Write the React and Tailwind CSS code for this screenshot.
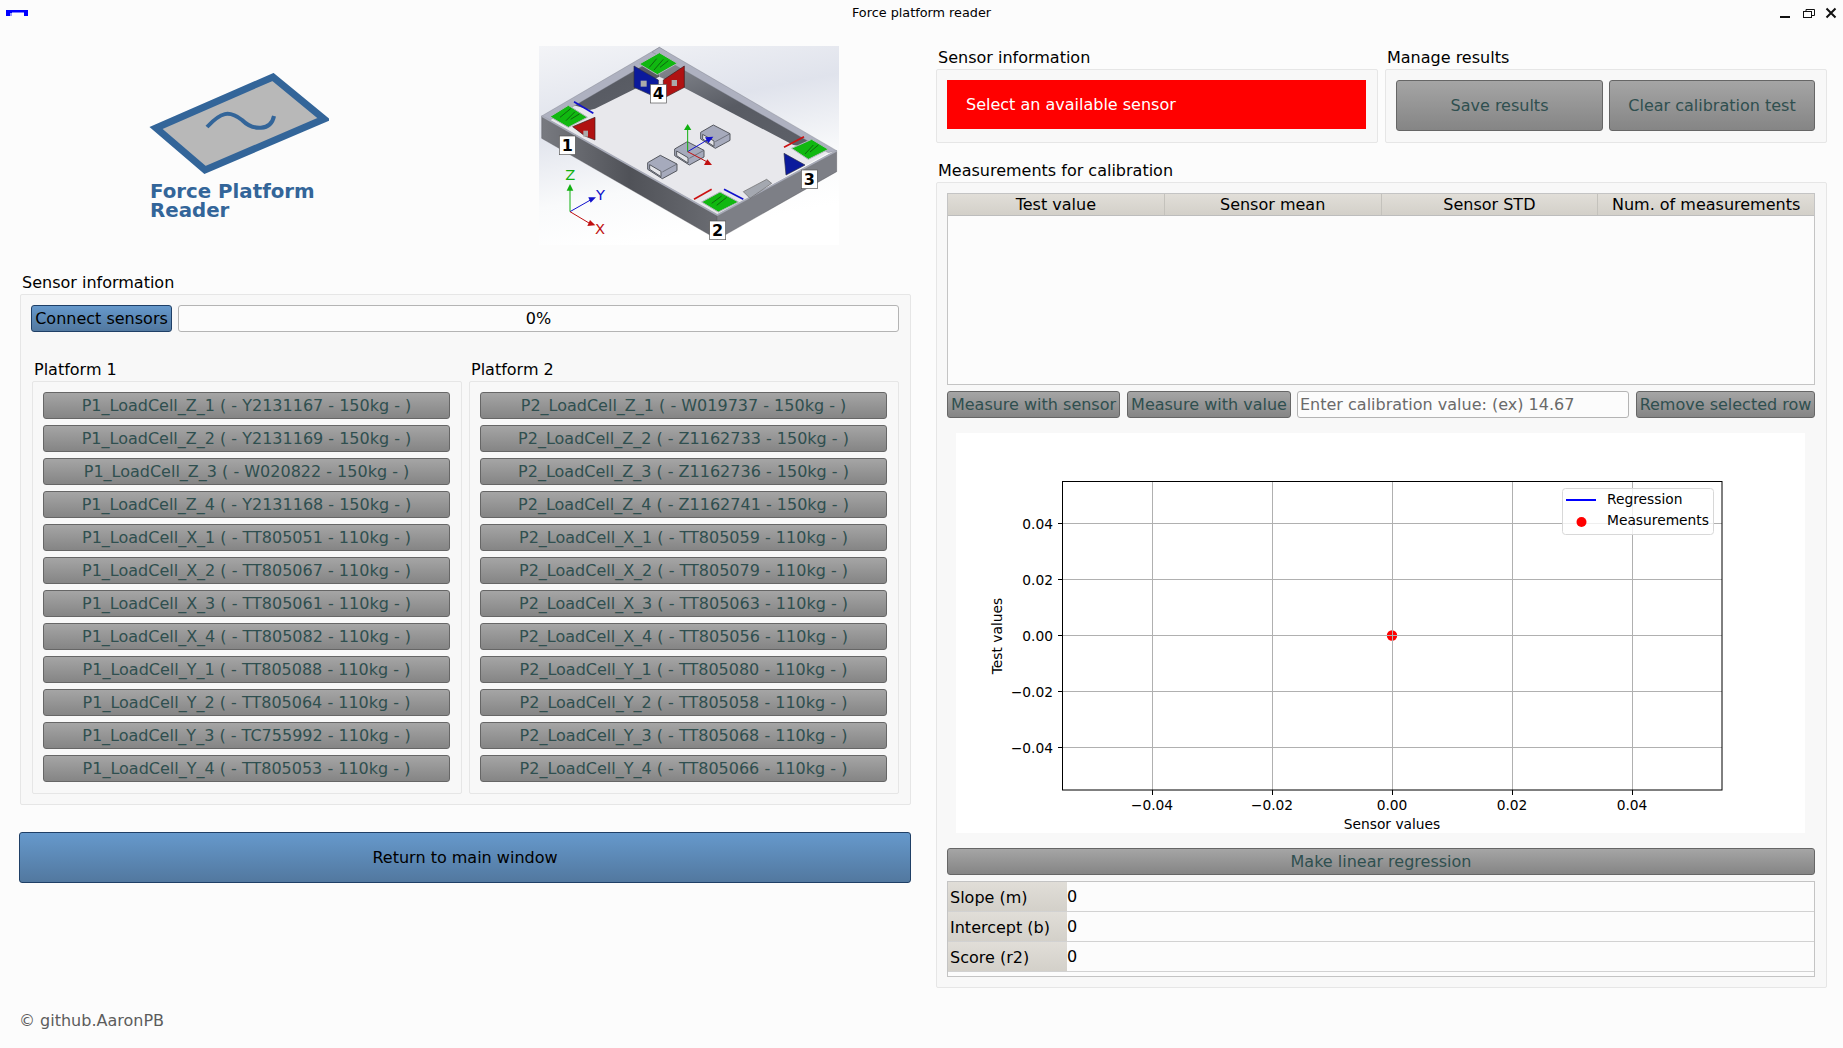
import React from 'react';

const p1Sensors = [
  'P1_LoadCell_Z_1 ( - Y2131167 - 150kg - )',
  'P1_LoadCell_Z_2 ( - Y2131169 - 150kg - )',
  'P1_LoadCell_Z_3 ( - W020822 - 150kg - )',
  'P1_LoadCell_Z_4 ( - Y2131168 - 150kg - )',
  'P1_LoadCell_X_1 ( - TT805051 - 110kg - )',
  'P1_LoadCell_X_2 ( - TT805067 - 110kg - )',
  'P1_LoadCell_X_3 ( - TT805061 - 110kg - )',
  'P1_LoadCell_X_4 ( - TT805082 - 110kg - )',
  'P1_LoadCell_Y_1 ( - TT805088 - 110kg - )',
  'P1_LoadCell_Y_2 ( - TT805064 - 110kg - )',
  'P1_LoadCell_Y_3 ( - TC755992 - 110kg - )',
  'P1_LoadCell_Y_4 ( - TT805053 - 110kg - )',
];

const p2Sensors = [
  'P2_LoadCell_Z_1 ( - W019737 - 150kg - )',
  'P2_LoadCell_Z_2 ( - Z1162733 - 150kg - )',
  'P2_LoadCell_Z_3 ( - Z1162736 - 150kg - )',
  'P2_LoadCell_Z_4 ( - Z1162741 - 150kg - )',
  'P2_LoadCell_X_1 ( - TT805059 - 110kg - )',
  'P2_LoadCell_X_2 ( - TT805079 - 110kg - )',
  'P2_LoadCell_X_3 ( - TT805063 - 110kg - )',
  'P2_LoadCell_X_4 ( - TT805056 - 110kg - )',
  'P2_LoadCell_Y_1 ( - TT805080 - 110kg - )',
  'P2_LoadCell_Y_2 ( - TT805058 - 110kg - )',
  'P2_LoadCell_Y_3 ( - TT805068 - 110kg - )',
  'P2_LoadCell_Y_4 ( - TT805066 - 110kg - )',
];

const grayBtn =
  'flex items-center justify-center rounded-[3px] border border-[#666666] bg-gradient-to-b from-[#a5a5a5] to-[#858585] text-[#2f4f4f] whitespace-nowrap';
const blueBtn =
  'flex items-center justify-center rounded-[3px] border border-[#1f3f66] bg-gradient-to-b from-[#6699cc] to-[#52789f] text-black whitespace-nowrap';
const group = 'rounded-[2px] border border-[#e6e6e6] bg-[#f8f8f8]';
const headCell = 'bg-gradient-to-b from-[#e1ded8] to-[#d3d0c9]';

const Label = ({ children, className = '' }) => (
  <div className={`h-[18px] mb-[3px] leading-[20px] ${className}`}>{children}</div>
);

const Logo = () => (
  <div className="w-[180px] ml-[130px] mt-[27px]">
    <svg width="180" height="104" viewBox="150 73 180 104" className="block">
      <polygon points="157,128 274,77 325,119 206,170" fill="#b8b8b8" stroke="#336599" strokeWidth="7" />
      <path d="M208 127 C 222 112, 230 110, 243 120 C 254 131, 272 131, 275 116" fill="none" stroke="#336599" strokeWidth="4" />
    </svg>
    <div className="mt-[5px] ml-px font-bold text-[19.8px] leading-[19px] text-[#336599]">
      Force Platform
      <br />
      Reader
    </div>
  </div>
);

const Plate = ({ points, lines }) => (
  <g>
    <polygon points={points} fill="#10b810" stroke="#b0b4bc" strokeWidth="3" />
    <path d={lines} fill="none" stroke="#0d3d0d" strokeWidth="2" />
  </g>
);

const NumTag = ({ x, y, n }) => (
  <g>
    <rect x={x} y={y} width="48" height="56" fill="#fff" stroke="#555" strokeWidth="2" />
    <text x={x + 24} y={y + 45} textAnchor="middle" fontSize="48" fontWeight="700" fill="#000">{n}</text>
  </g>
);

// small load cell block, x/y is its back corner
const Cell = ({ x, y }) => (
  <g transform={`translate(${x} ${y})`}>
    <polygon points="0,22 38,0 88,26 88,46 44,70 0,42" fill="#a6aabc" stroke="#55585f" strokeWidth="3" />
    <polygon points="6,28 40,48 40,64 6,42" fill="#e4e4e8" stroke="#55585f" strokeWidth="3" />
    <line x1="44" y1="50" x2="88" y2="26" stroke="#55585f" strokeWidth="2" />
  </g>
);

// isometric render of the platform frame
const PlatformRender = () => (
  <svg width="300" height="199" viewBox="117 48 900 597" className="block">
    <defs>
      <linearGradient id="sky" x1="0" y1="0" x2="0.3" y2="1">
        <stop offset="0" stopColor="#f3f4f7" />
        <stop offset="0.4" stopColor="#e0e3ec" />
        <stop offset="0.75" stopColor="#f9fafb" />
        <stop offset="1" stopColor="#ffffff" />
      </linearGradient>
      <linearGradient id="wallBack" x1="0" y1="0" x2="0.6" y2="1">
        <stop offset="0" stopColor="#8d9097" />
        <stop offset="0.6" stopColor="#585b63" />
        <stop offset="1" stopColor="#5c5f67" />
      </linearGradient>
      <linearGradient id="wallFront" x1="0" y1="0" x2="1" y2="0">
        <stop offset="0" stopColor="#787a80" />
        <stop offset="0.5" stopColor="#505258" />
        <stop offset="1" stopColor="#6a6c72" />
      </linearGradient>
    </defs>
    <rect x="117" y="48" width="900" height="597" fill="url(#sky)" />
    {/* floor */}
    <polygon points="150,270 478,130 985,368 652,555" fill="#e8e8ec" />
    {/* inner walls */}
    <polygon points="210,222 478,68 478,140 285,236 270,240" fill="url(#wallBack)" />
    <polygon points="478,68 985,362 880,345 555,175 478,140" fill="url(#wallBack)" />
    {/* rim */}
    <polygon points="125,258 478,52 500,66 150,270" fill="#aeb1c0" stroke="#6c6f78" strokeWidth="1" />
    <polygon points="478,52 1010,362 985,368 456,66" fill="#aeb1c0" stroke="#6c6f78" strokeWidth="1" />
    {/* outer walls */}
    <polygon points="125,258 652,555 652,628 125,325" fill="url(#wallFront)" stroke="#3f4146" strokeWidth="1" />
    <polygon points="652,555 1010,362 1010,425 652,628" fill="#7d7f86" stroke="#3f4146" strokeWidth="1" />
    <path d="M125 258 L652 555 L1010 362" fill="none" stroke="#a8abb8" strokeWidth="5" />
    {/* corner 4 */}
    <polygon points="402,108 475,150 475,205 402,172" fill="#0b1a9c" stroke="#2a2d44" strokeWidth="2" />
    <polygon points="490,150 553,108 553,172 490,205" fill="#b01212" stroke="#3d1a1a" strokeWidth="2" />
    <rect x="422" y="152" width="18" height="18" fill="#aaa" />
    <rect x="515" y="150" width="16" height="18" fill="#aaa" />
    <Plate points="418,102 478,68 532,100 472,134" lines="M448 112 L470 86 M462 120 L490 88 M480 112 L505 92" />
    {/* corner 1 */}
    <polygon points="218,290 285,262 285,330 255,318" fill="#b01212" stroke="#3d1a1a" strokeWidth="2" />
    <rect x="250" y="302" width="14" height="18" fill="#aaa" />
    <line x1="222" y1="215" x2="280" y2="250" stroke="#1111cc" strokeWidth="5" />
    <Plate points="150,260 205,226 262,262 205,292" lines="M180 262 L212 236 M198 272 L225 245 M212 268 L238 252" />
    {/* corner 3 */}
    <polygon points="852,370 915,405 858,435" fill="#0b1a9c" stroke="#2a2d44" strokeWidth="2" />
    <line x1="852" y1="352" x2="912" y2="320" stroke="#cc1111" strokeWidth="5" />
    <Plate points="875,355 935,328 985,358 925,388" lines="M915 372 L940 345 M930 366 L955 345" />
    {/* corner 2 */}
    <line x1="582" y1="508" x2="635" y2="478" stroke="#cc1111" strokeWidth="5" />
    <line x1="672" y1="478" x2="730" y2="508" stroke="#1111cc" strokeWidth="5" />
    <Plate points="605,516 660,486 715,516 655,546" lines="M635 520 L665 498 M650 526 L680 502" />
    {/* load cells on the floor */}
    <Cell x={524} y={335} />
    <Cell x={602} y={285} />
    <Cell x={443} y={376} />
    <path d="M730 485 L800 448 L815 460 L750 505 Z" fill="#a4a8b0" stroke="#666" strokeWidth="2" />
    {/* center axes */}
    <line x1="563" y1="365" x2="563" y2="295" stroke="#10b010" strokeWidth="3" />
    <polygon points="552,300 574,300 563,282" fill="#10b010" />
    <line x1="563" y1="365" x2="625" y2="328" stroke="#1111cc" strokeWidth="3" />
    <polygon points="615,322 640,320 625,340" fill="#1111cc" />
    <line x1="563" y1="365" x2="620" y2="395" stroke="#c01010" strokeWidth="3" />
    <polygon points="612,405 636,405 622,388" fill="#c01010" />
    {/* legend axes */}
    <line x1="210" y1="545" x2="210" y2="478" stroke="#10b010" strokeWidth="3" />
    <polygon points="200,482 220,482 210,462" fill="#10b010" />
    <line x1="210" y1="545" x2="275" y2="508" stroke="#1111cc" strokeWidth="3" />
    <polygon points="265,502 288,502 272,518" fill="#1111cc" />
    <line x1="210" y1="545" x2="272" y2="582" stroke="#c01010" strokeWidth="3" />
    <polygon points="262,588 286,586 270,570" fill="#c01010" />
    <text x="196" y="449" fontSize="44" fill="#10b010">Z</text>
    <text x="288" y="510" fontSize="44" fill="#1111cc">Y</text>
    <text x="285" y="612" fontSize="44" fill="#c01010">X</text>
    <NumTag x={178} y={318} n="1" />
    <NumTag x={629} y={573} n="2" />
    <NumTag x={904} y={420} n="3" />
    <NumTag x={451} y={163} n="4" />
  </svg>
);

const xTicks = [
  [1152, '−0.04'],
  [1272, '−0.02'],
  [1392, '0.00'],
  [1512, '0.02'],
  [1632, '0.04'],
];
const yTicks = [
  [523, '0.04'],
  [579, '0.02'],
  [635, '0.00'],
  [691, '−0.02'],
  [747, '−0.04'],
];

const Chart = () => (
  <svg width="849" height="400" viewBox="956 433 849 400" className="block bg-white" fontSize="13.8" fill="#000">
    <circle cx="1392" cy="635.5" r="5.2" fill="#ff0000" />
    {xTicks.map(([x, t]) => (
      <g key={t}>
        <rect x={x} y="481" width="1" height="309" fill="#b0b0b0" />
        <rect x={x} y="790" width="1" height="5" fill="#000" />
        <text x={x} y="810" textAnchor="middle">{t}</text>
      </g>
    ))}
    {yTicks.map(([y, t]) => (
      <g key={t}>
        <rect x="1063" y={y} width="659" height="1" fill="#b0b0b0" />
        <rect x="1058" y={y} width="5" height="1" fill="#000" />
        <text x="1053" y={y + 6} textAnchor="end">{t}</text>
      </g>
    ))}
    <rect x="1062.5" y="481.5" width="659.5" height="308.5" fill="none" stroke="#000" strokeWidth="1" />
    <rect x="1562.5" y="488.5" width="151" height="46" rx="3" fill="#ffffff" fillOpacity="0.8" stroke="#d8d8d8" />
    <line x1="1566" y1="500" x2="1596" y2="500" stroke="#0000ff" strokeWidth="2" />
    <circle cx="1581.5" cy="522" r="5" fill="#ff0000" />
    <text x="1607" y="504">Regression</text>
    <text x="1607" y="525">Measurements</text>
    <text x="1392" y="829" textAnchor="middle">Sensor values</text>
    <text x="1002" y="636" textAnchor="middle" transform="rotate(-90 1002 636)">Test values</text>
  </svg>
);

const ResultRow = ({ label }) => (
  <div className="flex h-[30px] border-b border-[#d2d2d2]">
    <div className={`w-[119px] pl-[2px] pt-[2px] flex items-center ${headCell}`}>{label}</div>
    <div className="flex items-center">0</div>
  </div>
);

export default function App() {
  return (
    <div className="w-[1843px] h-[1048px] overflow-hidden bg-[#fcfcfc] text-black text-[16px] font-['DejaVu_Sans',sans-serif]">
      {/* title bar */}
      <div className="relative h-[26px] flex items-center justify-center text-[12.8px]">
        <svg width="24" height="8" viewBox="0 0 24 8" className="absolute left-[5px] top-[9px]">
          <rect x="1" y="1" width="22" height="2.5" fill="#0000ff" />
          <rect x="1" y="3" width="6" height="4" fill="#0000ff" />
          <rect x="19" y="3" width="4" height="4" fill="#0000ff" />
          <rect x="5" y="4" width="2" height="3" fill="#9c9cff" />
        </svg>
        Force platform reader
        <div className="absolute right-[6px] top-[7px] flex items-center">
          <svg width="12" height="12" viewBox="0 0 12 12"><rect x="1" y="9" width="10" height="2" fill="#111" /></svg>
          <svg width="12" height="12" viewBox="0 0 12 12" fill="none" stroke="#111" className="ml-[12px]"><rect x="0.5" y="4.5" width="8" height="6" /><path d="M3 4 V2.5 H11.5 V8.5 H9" /></svg>
          <svg width="12" height="12" viewBox="0 0 12 12" stroke="#111" strokeWidth="2" className="ml-[10px]"><path d="M1.5 1.5 L10.5 10.5 M10.5 1.5 L1.5 10.5" /></svg>
        </div>
      </div>

      <div className="flex pl-[19px] gap-[25px]">
        {/* left column */}
        <div className="w-[892px] pt-[20px]">
          <div className="flex h-[199px]">
            <Logo />
            <div className="ml-[210px]">
              <PlatformRender />
            </div>
          </div>

          <Label className="mt-[28px] ml-[3px]">Sensor information</Label>
          <div className={`${group} ml-px px-[10px] pt-[10px] pb-[10px]`}>
            <div className="flex gap-[6px] h-[27px]">
              <button className={`${blueBtn} w-[141px]`}>Connect sensors</button>
              <div className="w-[721px] rounded-[3px] border border-[#b4b4b4] bg-[#fcfcfc] flex items-center justify-center">0%</div>
            </div>
            <div className="ml-px mt-[28px] grid grid-cols-[430px_430px] gap-x-[7px]">
              {[['Platform 1', p1Sensors], ['Platform 2', p2Sensors]].map(([title, sensors]) => (
                <div key={title}>
                  <Label className="ml-[2px]">{title}</Label>
                  <div className={`${group} pl-[10px] pr-[11px] pt-[10px] pb-[11px] flex flex-col gap-[6px]`}>
                    {sensors.map((s) => (
                      <button key={s} className={`${grayBtn} h-[27px]`}>{s}</button>
                    ))}
                  </div>
                </div>
              ))}
            </div>
          </div>

          <button className={`${blueBtn} w-full h-[51px] mt-[27px]`}>Return to main window</button>
          <div className="mt-[129px] text-[#5c5c5c] leading-[18px]">© github.AaronPB</div>
        </div>

        {/* right column */}
        <div className="w-[891px]">
          <div className="flex gap-[7px] pt-[22px]">
            <div className="w-[442px]">
              <Label className="ml-[2px]">Sensor information</Label>
              <div className={`${group} h-[74px] px-[10px] pt-[10px]`}>
                <div className="h-[49px] bg-[#ff0000] text-white flex items-center pl-[19px] w-[419px]">Select an available sensor</div>
              </div>
            </div>
            <div className="w-[442px]">
              <Label className="ml-[2px]">Manage results</Label>
              <div className={`${group} h-[74px] px-[10px] pt-[10px] flex gap-[6px]`}>
                <button className={`${grayBtn} w-[207px] h-[51px]`}>Save results</button>
                <button className={`${grayBtn} w-[206px] h-[51px]`}>Clear calibration test</button>
              </div>
            </div>
          </div>

          <Label className="mt-[18px] ml-[2px]">Measurements for calibration</Label>
          <div className={`${group} h-[806px] px-[10px] pt-[10px]`}>
            <div className="h-[192px] w-[868px] border border-[#c4c4c4] bg-[#fcfcfc]">
              <div className={`flex h-[22px] border-b border-[#bdbdbd] ${headCell}`}>
                {['Test value', 'Sensor mean', 'Sensor STD', 'Num. of measurements'].map((h) => (
                  <div key={h} className="flex-1 flex items-center justify-center border-r border-[#c4c2bc] last:border-r-0">{h}</div>
                ))}
              </div>
            </div>

            <div className="flex mt-[6px] h-[27px] w-[868px]">
              <button className={`${grayBtn} w-[173px]`}>Measure with sensor</button>
              <button className={`${grayBtn} w-[164px] ml-[7px]`}>Measure with value</button>
              <input
                readOnly
                placeholder="Enter calibration value: (ex) 14.67"
                className="w-[332px] ml-[6px] rounded-[3px] border border-[#b4b4b4] bg-[#fcfcfc] px-[2px] placeholder:text-[#6a6a6a]"
              />
              <button className={`${grayBtn} w-[179px] ml-[7px]`}>Remove selected row</button>
            </div>

            <div className="mt-[15px] ml-[9px]">
              <Chart />
            </div>

            <button className={`${grayBtn} w-[868px] h-[27px] mt-[15px]`}>Make linear regression</button>

            <div className="mt-[6px] h-[96px] w-[868px] border border-[#c4c4c4] bg-[#fcfcfc]">
              <ResultRow label="Slope (m)" />
              <ResultRow label="Intercept (b)" />
              <ResultRow label="Score (r2)" />
            </div>
          </div>
        </div>
      </div>
    </div>
  );
}
